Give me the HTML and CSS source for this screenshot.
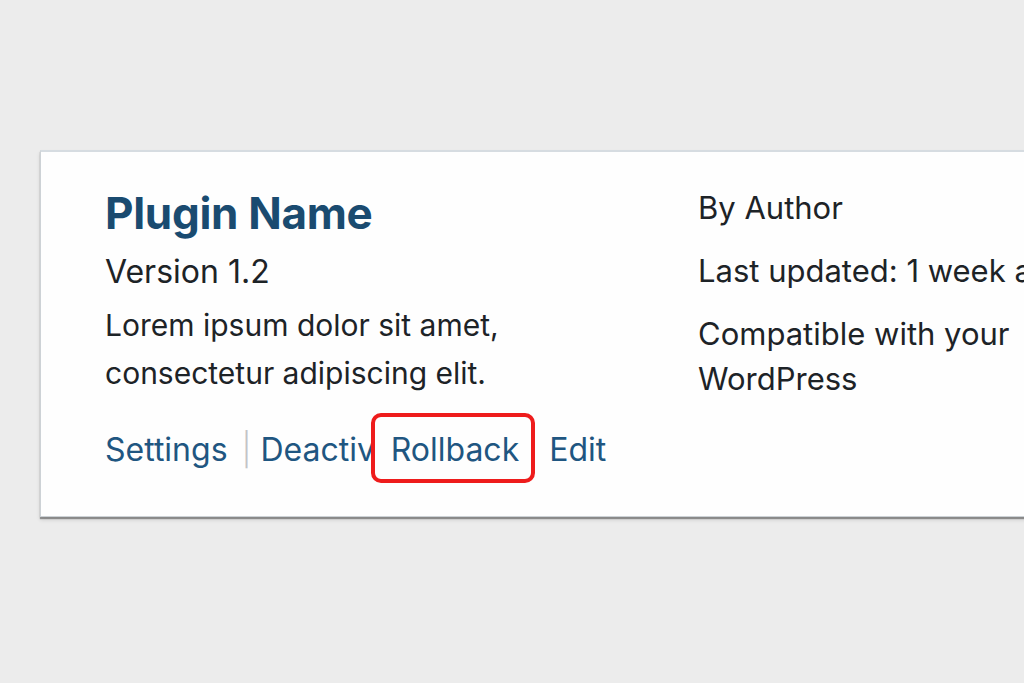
FILE: index.html
```html
<!DOCTYPE html>
<html lang="en">
<head>
<meta charset="utf-8">
<title>Plugin Row</title>
<link rel="stylesheet" href="styles.css">
</head>
<body>
<div class="card">
  <div class="main">
    <h1 class="title">Plugin Name</h1>
    <p class="version">Version 1.2</p>
    <p class="desc">Lorem ipsum dolor sit amet,<br>consectetur adipiscing elit.</p>
    <div class="actions">
      <a class="link" href="#">Settings</a>
      <span class="sep">|</span>
      <a class="link deact" href="#">Deactivate</a>
      <a class="link rollback" href="#">Rollback</a>
      <a class="link edit" href="#">Edit</a>
    </div>
  </div>
  <div class="meta">
    <p class="meta-line">By Author</p>
    <p class="meta-line">Last updated: 1 week ago</p>
    <p class="meta-line compat">Compatible with your<br>WordPress</p>
  </div>
</div>
</body>
</html>
```

FILE: styles.css
```css
html, body {
  margin: 0;
  padding: 0;
}
body {
  background: #ececec;
  overflow: hidden;
  width: 1024px;
  height: 683px;
  font-family: Inter, "Liberation Sans", sans-serif;
  color: #1d2327;
}
.card {
  margin: 150px 0 0 40px;
  width: 1100px;
  height: 367px;
  box-sizing: border-box;
  background: #fefefe;
  border: 1px solid #cdd2d6;
  border-top: 2px solid #d6dce1;
  box-shadow: 0 2px 1px rgba(0, 0, 0, 0.35), 0 3px 4px rgba(0, 0, 0, 0.12);
  padding: 35px 0 0 64px;
  display: grid;
  grid-template-columns: 593px 1fr;
}
.title {
  margin: 0;
  font-size: 44px;
  line-height: 52px;
  font-weight: 700;
  color: #1a4b70;
  letter-spacing: -0.3px;
}
.version {
  margin: 13px 0 0;
  font-size: 32px;
  line-height: 40px;
}
.desc {
  margin: 9px 0 0;
  font-size: 30px;
  line-height: 48px;
}
.actions {
  margin-top: 16px;
  display: flex;
  align-items: baseline;
  font-size: 32px;
  line-height: 40px;
}
.link {
  color: #1f5681;
  text-decoration: none;
}
.sep {
  color: #c3c4c7;
  margin: 0 9px 0 14px;
  font-weight: 300;
}
.rollback {
  position: relative;
  z-index: 1;
  margin-left: -51px;
  padding: 13px 12px 9px 16px;
  border: 4px solid #ee1c1c;
  border-radius: 10px;
  background: #fefefe;
}
.edit {
  margin-left: 14px;
}
.meta {
  padding-top: 0;
}
.meta-line {
  margin: 0 0 22px;
  font-size: 31px;
  line-height: 41px;
  white-space: nowrap;
}
.compat {
  margin-top: -2px;
  line-height: 45px;
}
```
